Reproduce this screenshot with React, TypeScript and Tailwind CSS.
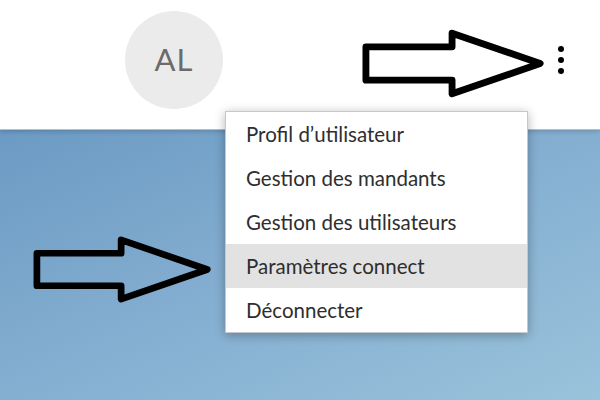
import React from 'react';

const items = [
  'Profil d\u2019utilisateur',
  'Gestion des mandants',
  'Gestion des utilisateurs',
  'Paramètres connect',
  'Déconnecter',
];

const Arrow = ({ className, fill }: { className: string; fill: string }) => (
  <svg className={className} viewBox="0 0 190 70" fill={fill}>
    <polygon
      points="4,18 92,18 92,4 182,35 92,66 92,52 4,52"
      stroke="#000"
      strokeWidth="7"
      strokeLinejoin="round"
    />
  </svg>
);

const App = () => {
  return (
    <div className="relative w-[600px] h-[400px] overflow-hidden font-['Lato',sans-serif]">
      {/* header */}
      <header className="relative h-[130px] bg-white flex items-center border-b border-[#b8bfc6] shadow-[0_2px_4px_rgba(0,0,0,0.15)] z-10">
        <div className="ml-[125px] w-[98px] h-[98px] rounded-full bg-[#ebebeb] flex items-center justify-center text-[31px] tracking-[1px] text-[#6b6b6b] -mt-[10px]">
          AL
        </div>
        <div className="ml-auto mr-[36px] -mt-[10px] flex flex-col gap-[5px]">
          <span className="w-[6px] h-[6px] rounded-full bg-black" />
          <span className="w-[6px] h-[6px] rounded-full bg-black" />
          <span className="w-[6px] h-[6px] rounded-full bg-black" />
        </div>
      </header>

      {/* body */}
      <main className="h-[270px] bg-gradient-to-br from-[#6b9ac3] via-[#85afd1] to-[#99c2db]" />

      {/* arrow pointing to menu button */}
      <Arrow className="absolute left-[362px] top-[29px] w-[186px] h-[69px] z-20" fill="#fff" />

      {/* dropdown menu */}
      <div className="absolute left-[225px] top-[111px] w-[303px] bg-white border border-[#c8c8c8] shadow-[0_2px_10px_rgba(0,0,0,0.3)] z-20">
        {items.map((label, i) => (
          <div
            key={label}
            className={`h-[44px] flex items-center pl-[20px] text-[20.5px] text-[#2e2e2e] ${
              i === 3 ? 'bg-[#e2e2e2]' : ''
            }`}
          >
            {label}
          </div>
        ))}
      </div>

      {/* arrow pointing to highlighted item */}
      <Arrow className="absolute left-[30px] top-[236px] w-[188px] h-[67px] z-20" fill="none" />
    </div>
  );
};

export default App;
